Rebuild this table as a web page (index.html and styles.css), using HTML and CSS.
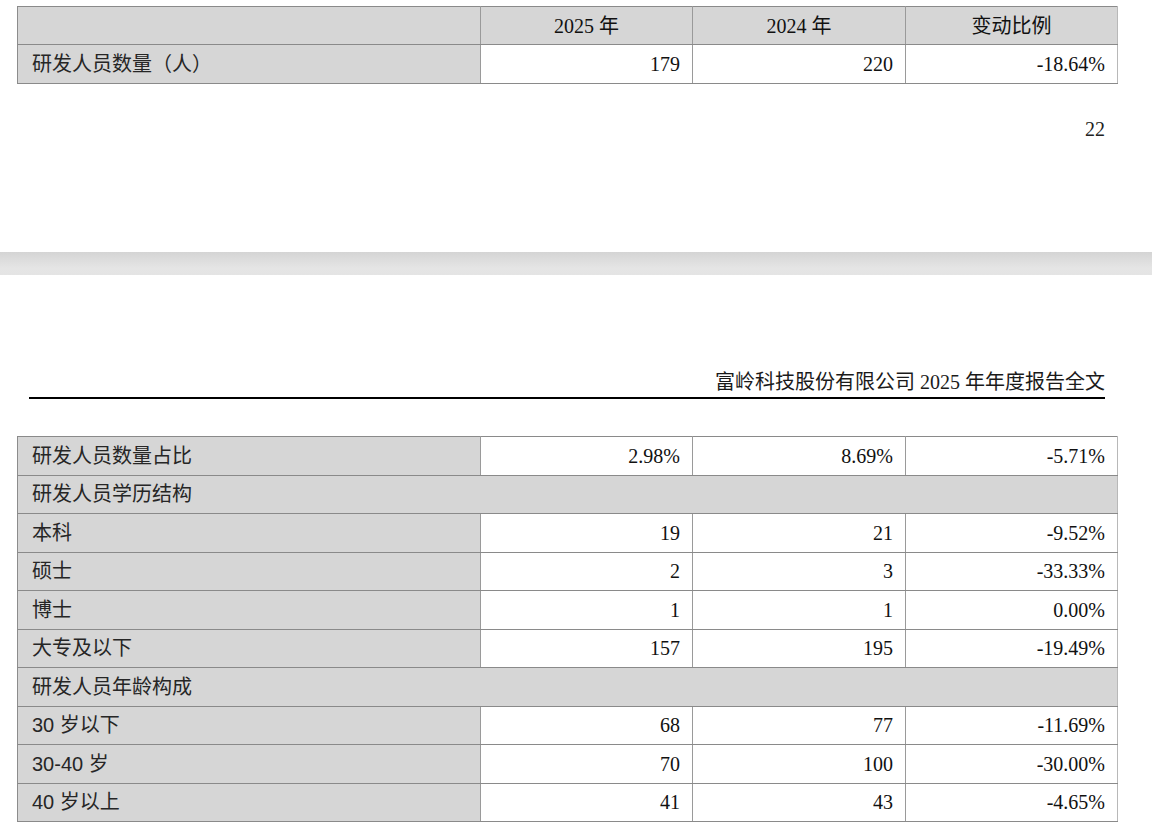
FILE: index.html
```html
<!DOCTYPE html>
<html lang="zh-CN">
<head>
<meta charset="utf-8">
<title>富岭科技股份有限公司 2025 年年度报告全文</title>
<link rel="stylesheet" href="styles.css">
</head>
<body>
<section class="page page-first">
  <table class="grid grid-top">
    <colgroup><col class="c1"><col class="c2"><col class="c3"><col class="c4"></colgroup>
    <tr class="head">
      <td class="label"></td>
      <td class="center">2025 年</td>
      <td class="center">2024 年</td>
      <td class="center">变动比例</td>
    </tr>
    <tr class="r39">
      <td class="label">研发人员数量（人）</td>
      <td class="num">179</td>
      <td class="num">220</td>
      <td class="num">-18.64%</td>
    </tr>
  </table>
  <div class="page-number">22</div>
</section>
<div class="page-gap"></div>
<section class="page page-second">
  <div class="running-head">富岭科技股份有限公司 2025 年年度报告全文</div>
  <table class="grid grid-main">
    <colgroup><col class="c1"><col class="c2"><col class="c3"><col class="c4"></colgroup>
    <tr>
      <td class="label">研发人员数量占比</td>
      <td class="num">2.98%</td>
      <td class="num">8.69%</td>
      <td class="num">-5.71%</td>
    </tr>
    <tr class="group">
      <td class="label" colspan="4">研发人员学历结构</td>
    </tr>
    <tr>
      <td class="label">本科</td>
      <td class="num">19</td>
      <td class="num">21</td>
      <td class="num">-9.52%</td>
    </tr>
    <tr>
      <td class="label">硕士</td>
      <td class="num">2</td>
      <td class="num">3</td>
      <td class="num">-33.33%</td>
    </tr>
    <tr>
      <td class="label">博士</td>
      <td class="num">1</td>
      <td class="num">1</td>
      <td class="num">0.00%</td>
    </tr>
    <tr>
      <td class="label">大专及以下</td>
      <td class="num">157</td>
      <td class="num">195</td>
      <td class="num">-19.49%</td>
    </tr>
    <tr class="group">
      <td class="label" colspan="4">研发人员年龄构成</td>
    </tr>
    <tr>
      <td class="label">30 岁以下</td>
      <td class="num">68</td>
      <td class="num">77</td>
      <td class="num">-11.69%</td>
    </tr>
    <tr>
      <td class="label">30-40 岁</td>
      <td class="num">70</td>
      <td class="num">100</td>
      <td class="num">-30.00%</td>
    </tr>
    <tr>
      <td class="label">40 岁以上</td>
      <td class="num">41</td>
      <td class="num">43</td>
      <td class="num">-4.65%</td>
    </tr>
  </table>
</section>
</body>
</html>
```

FILE: styles.css
```css
html, body {
  margin: 0;
  padding: 0;
  background: #ffffff;
}

body {
  width: 1152px;
  color: #111111;
  font-family: "Liberation Serif", "Noto Sans CJK SC", serif;
  overflow: hidden;
}

.page-first {
  height: 252px;
  padding-top: 6px;
  box-sizing: border-box;
}

.page-gap {
  height: 23px;
  background: linear-gradient(to bottom, #d4d4d4 0%, #dedede 40%, #e5e5e5 70%, #e4e4e4 100%);
}

.page-second {
  padding-top: 96px;
}

.grid {
  margin-left: 17px;
  width: 1100px;
  border-collapse: collapse;
  table-layout: fixed;
  font-size: 20px;
}

.c1 { width: 463px; }
.c2 { width: 212px; }
.c3 { width: 213px; }
.c4 { width: 212px; }

.grid td {
  height: 38.5px;
  padding: 0 12px;
  border: 1px solid #8a8a8a;
  border-left-color: #9a9a9a;
  border-right-color: #9a9a9a;
  box-sizing: border-box;
  line-height: 22px;
  vertical-align: middle;
  white-space: nowrap;
}

.grid td:last-child {
  border-right-color: #b8b8b8;
}

.grid td.label:first-child {
  border-left-color: #8c8c8c;
}

.grid tr.head td {
  height: 38px;
  background: #d6d6d6;
}

.grid tr.r39 td {
  height: 39px;
}

.grid td.label {
  background: #d6d6d6;
  padding-left: 14px;
  font-family: "Liberation Sans", "Noto Sans CJK SC", sans-serif;
  color: #262626;
}

.grid td.center {
  text-align: center;
}

.grid td.num {
  text-align: right;
  background: #ffffff;
}

.grid tr.group td {
  background: #d6d6d6;
}

.page-number {
  margin-top: 34px;
  padding-right: 47px;
  text-align: right;
  font-size: 20px;
  line-height: 22px;
  color: #222222;
}

.running-head {
  margin: 0 47px 0 29px;
  padding-bottom: 4px;
  border-bottom: 2px solid #000000;
  text-align: right;
  font-size: 20px;
  line-height: 22px;
  color: #1a1a1a;
}

.grid-main {
  margin-top: 37px;
}
```
